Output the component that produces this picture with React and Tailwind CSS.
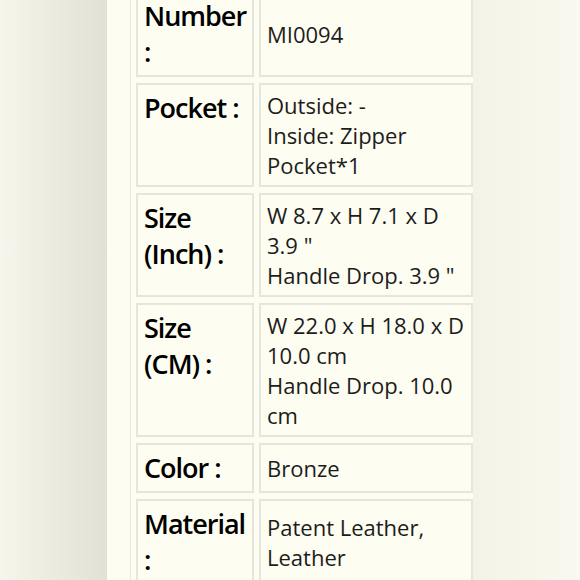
export default function App() {
  const rows = [
    { label: ["Number", ":"], value: ["MI0094"], h: "h-[86px]" },
    { label: ["Pocket :"], value: ["Outside: -", "Inside: Zipper", "Pocket*1"], h: "h-[104px]" },
    { label: ["Size", "(Inch) :"], value: ["W 8.7 x H 7.1 x D", "3.9 \"", "Handle Drop. 3.9 \""], h: "h-[104px]" },
    { label: ["Size", "(CM) :"], value: ["W 22.0 x H 18.0 x D", "10.0 cm", "Handle Drop. 10.0", "cm"], h: "h-[134px]" },
    { label: ["Color :"], value: ["Bronze"], h: "h-[50px]" },
    { label: ["Material", ":"], value: ["Patent Leather,", "Leather"], h: "h-[86px]" },
  ];
  return (
    <div
      className="w-[580px] h-[580px] overflow-hidden flex bg-[#f8f8ed]"
      style={{ fontFamily: '"Open Sans", "Noto Sans", sans-serif' }}
    >
      <div className="w-[107px] h-full bg-gradient-to-r from-[#f6f6ec] via-[#ebebe0] to-[#e1e1d5]" />
      <div className="w-[366px] h-full bg-[#fdfdf1] overflow-hidden flex">
        <div className="ml-[23px] flex-1 border-l border-[#e8e8de] pl-[5px] flex flex-col gap-[6px] -mt-[9px]">
          {rows.map((r, i) => (
            <div key={i} className={`flex gap-[5px] shrink-0 ${r.h}`}>
              <div className="w-[118px] shrink-0 border-2 border-[#e6e6dc] pl-[6px] pr-[4px] py-[5px] text-[27px] leading-[36px] font-semibold text-black tracking-[-1px]">
                {r.label.map((l, j) => (
                  <div key={j} className="whitespace-nowrap">{l}</div>
                ))}
              </div>
              <div className="w-[214px] shrink-0 border-2 border-[#e6e6dc] px-[6px] py-[5px] flex flex-col justify-center text-[22px] leading-[30px] text-[#1c1c1c]">
                {r.value.map((v, j) => (
                  <div key={j} className="whitespace-nowrap">{v}</div>
                ))}
              </div>
            </div>
          ))}
        </div>
      </div>
      <div className="flex-1 h-full bg-gradient-to-r from-[#f3f3e8] to-[#f9f9ef]" />
    </div>
  );
}
